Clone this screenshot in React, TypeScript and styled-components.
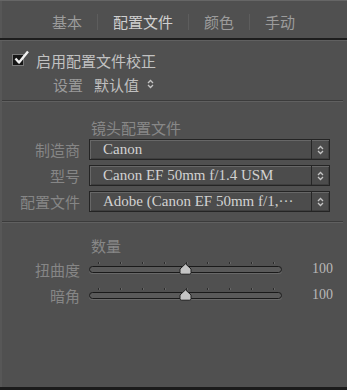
import React from "react";
import styled, { createGlobalStyle } from "styled-components";

const GlobalStyle = createGlobalStyle`
  html, body {
    margin: 0;
    padding: 0;
    background: #505050;
  }
`;

const cjk = `"Noto Sans CJK SC", "Noto Sans", sans-serif`;
const serif = `"Liberation Serif", "DejaVu Serif", "Noto Sans CJK SC", serif`;

const Panel = styled.div`
  width: 347px;
  height: 390px;
  box-sizing: border-box;
  background: #505050;
  border-top: 1px solid #666;
  border-bottom: 3px solid #1b1b1b;
  box-shadow: inset 2px 0 0 #575757;
  display: flex;
  flex-direction: column;
  font-family: ${cjk};
  overflow: hidden;
`;

const TabBar = styled.div`
  height: 37px;
  padding-top: 4px;
  box-sizing: border-box;
  display: flex;
  align-items: center;
  justify-content: center;
  gap: 12px;
`;

const Tab = styled.span<{ $active?: boolean }>`
  font-size: 15px;
  line-height: 20px;
  color: ${p => (p.$active ? "#d0d0d0" : "#9c9c9c")};
`;

const TabSep = styled.span`
  width: 1px;
  height: 16px;
  background: #5d5d5d;
  margin: 0 3px;
`;

const Groove = styled.div<{ $heavy?: boolean }>`
  height: ${p => (p.$heavy ? "2px" : "1px")};
  background: ${p => (p.$heavy ? "#1d1d1d" : "#3b3b3b")};
  border-bottom: 1px solid #606060;
  margin: ${p => (p.$heavy ? "0" : "0 4px 0 2px")};
`;

const Section = styled.div<{ $top: number; $bottom: number }>`
  padding: ${p => p.$top}px 0 ${p => p.$bottom}px 0;
  display: flex;
  flex-direction: column;
`;

const CheckRow = styled.label`
  display: flex;
  align-items: center;
  height: 20px;
  padding-left: 12px;
  gap: 12px;
  font-size: 15px;
  color: #c2c2c2;
`;

const CheckBox = styled.span`
  position: relative;
  width: 12px;
  height: 12px;
  box-sizing: border-box;
  background: #161616;
  border: 1px solid #7a7a7a;
  flex-shrink: 0;
`;

const CheckMark = styled.svg`
  position: absolute;
  left: 1px;
  top: -5px;
`;

const SettingRow = styled.div`
  display: flex;
  align-items: center;
  height: 20px;
  margin-top: 4px;
  padding-left: 53px;
  gap: 11px;
  font-size: 15px;
`;

const SettingLabel = styled.span`
  color: #9a9a9a;
`;

const SettingValue = styled.span`
  color: #c0c0c0;
  display: flex;
  align-items: center;
  gap: 8px;
`;

const Header = styled.div`
  height: 19px;
  line-height: 19px;
  padding-left: 91px;
  font-size: 15px;
  color: #888;
`;

const Rows = styled.div<{ $gap: number; $mt: number }>`
  display: flex;
  flex-direction: column;
  gap: ${p => p.$gap}px;
  margin-top: ${p => p.$mt}px;
`;

const FieldRow = styled.div`
  display: grid;
  grid-template-columns: 80px 241px;
  column-gap: 9px;
  align-items: center;
`;

const SliderRow = styled.div`
  display: grid;
  grid-template-columns: 80px 193px 42px;
  column-gap: 9px;
  align-items: center;
  height: 26px;
`;

const Label = styled.span`
  text-align: right;
  font-size: 15px;
  color: #868686;
  white-space: nowrap;
`;

const Select = styled.div`
  height: 21px;
  box-sizing: border-box;
  border: 1px solid #242424;
  background: #4c4c4c;
  box-shadow: inset 1px 1px 0 #676767, inset -1px -1px 0 #3e3e3e;
  display: flex;
  align-items: stretch;
`;

const SelectText = styled.span`
  flex: 1;
  padding-left: 13px;
  font-family: ${serif};
  font-size: 15px;
  line-height: 19px;
  color: #d2d2d2;
  white-space: nowrap;
  overflow: hidden;
`;

const Stepper = styled.span`
  width: 17px;
  border-left: 1px solid #262626;
  display: flex;
  align-items: center;
  justify-content: center;
`;

const Track = styled.div`
  position: relative;
  height: 26px;
`;

const TrackBar = styled.div`
  position: absolute;
  left: 0;
  right: 0;
  top: 10px;
  height: 7px;
  box-sizing: border-box;
  border: 1.5px solid #1a1a1a;
  border-radius: 4px;
  background: #5a5a5a;
  box-shadow: 0 1px 0 #686868;
`;

const Ticks = styled.div`
  position: absolute;
  left: 9px;
  right: 8px;
  top: 6px;
  display: flex;
  justify-content: space-between;
`;

const Tick = styled.span`
  width: 1px;
  height: 2px;
  background: #2c2c2c;
  box-shadow: 1px 0 0 #666;
`;

const Thumb = styled.svg`
  position: absolute;
  left: 50%;
  top: 7px;
  margin-left: -6.5px;
`;

const Value = styled.span`
  text-align: right;
  font-family: ${serif};
  font-size: 14px;
  color: #b8b8b8;
`;

const Filler = styled.div`
  flex: 1;
`;

const UpDown: React.FC<{ color?: string }> = ({ color = "#c4c4c4" }) => (
  <svg width="7" height="10" viewBox="0 0 7 10">
    <path d="M1 4 L3.5 1.5 L6 4" fill="none" stroke={color} strokeWidth="1.3" />
    <path d="M1 6 L3.5 8.5 L6 6" fill="none" stroke={color} strokeWidth="1.3" />
  </svg>
);

const Slider: React.FC<{ label: string; value: number }> = ({ label, value }) => (
  <SliderRow>
    <Label>{label}</Label>
    <Track>
      <Ticks>
        {Array.from({ length: 9 }).map((_, i) => (
          <Tick key={i} />
        ))}
      </Ticks>
      <TrackBar />
      <Thumb width="13" height="12" viewBox="0 0 13 12">
        <path d="M6.5 0.8 L12 6 L12 9.5 Q12 11.2 10.3 11.2 L2.7 11.2 Q1 11.2 1 9.5 L1 6 Z" fill="#c4c4c4" stroke="#1e1e1e" strokeWidth="1" />
      </Thumb>
    </Track>
    <Value>{value}</Value>
  </SliderRow>
);

const selects = [
  { label: "制造商", value: "Canon" },
  { label: "型号", value: "Canon EF 50mm f/1.4 USM" },
  { label: "配置文件", value: "Adobe (Canon EF 50mm f/1,···" },
];

export default function App() {
  return (
    <>
      <GlobalStyle />
      <Panel>
        <TabBar>
          <Tab>基本</Tab>
          <TabSep />
          <Tab $active>配置文件</Tab>
          <TabSep />
          <Tab>颜色</Tab>
          <TabSep />
          <Tab>手动</Tab>
        </TabBar>
        <Groove $heavy />

        <Section $top={9} $bottom={6}>
          <CheckRow>
            <CheckBox>
              <CheckMark width="16" height="16" viewBox="0 0 16 16">
                <path d="M1.5 8.5 L5 12.5 L14 1.5" fill="none" stroke="#f2f2f2" strokeWidth="2.4" strokeLinejoin="round" />
              </CheckMark>
            </CheckBox>
            启用配置文件校正
          </CheckRow>
          <SettingRow>
            <SettingLabel>设置</SettingLabel>
            <SettingValue>
              默认值
              <UpDown />
            </SettingValue>
          </SettingRow>
        </Section>
        <Groove />

        <Section $top={16} $bottom={9}>
          <Header>镜头配置文件</Header>
          <Rows $gap={5} $mt={2}>
            {selects.map(s => (
              <FieldRow key={s.label}>
                <Label>{s.label}</Label>
                <Select>
                  <SelectText>{s.value}</SelectText>
                  <Stepper>
                    <UpDown />
                  </Stepper>
                </Select>
              </FieldRow>
            ))}
          </Rows>
        </Section>
        <Groove />

        <Section $top={13} $bottom={0}>
          <Header>数量</Header>
          <Rows $gap={0} $mt={1}>
            <Slider label="扭曲度" value={100} />
            <Slider label="暗角" value={100} />
          </Rows>
        </Section>
        <Filler />
      </Panel>
    </>
  );
}
